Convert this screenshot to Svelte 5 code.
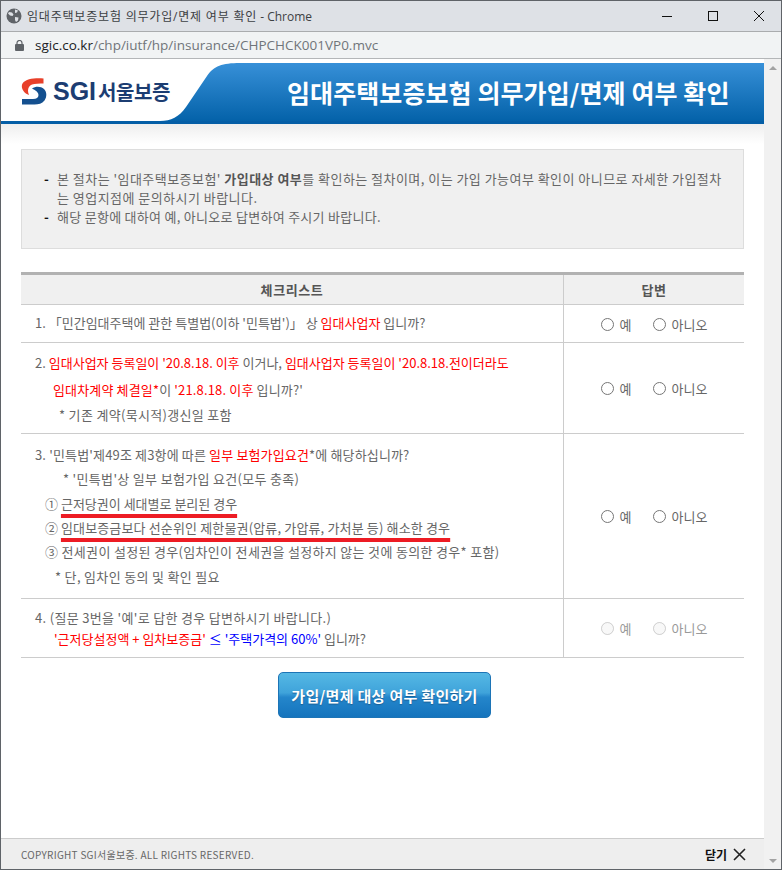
<script>
  const yesNo = (name, disabled = false) => ({ name, disabled })
</script>

{#snippet answer(opt)}
  <td class="answer">
    <label class:off={opt.disabled}><input type="radio" name={opt.name} disabled={opt.disabled} /> 예</label>
    <label class:off={opt.disabled}><input type="radio" name={opt.name} disabled={opt.disabled} /> 아니오</label>
  </td>
{/snippet}

<div class="window">
  <div class="titlebar">
    <svg class="globe" width="16" height="16" viewBox="0 0 16 16">
      <circle cx="8" cy="8" r="7.5" fill="#5f6368" />
      <path d="M3 4l3 .5 1.5 2-1 1.5-2.5-.5-2-2zM9 9l3.500 .5-.5 3-2 1.500-1-2zM9 1.500l3 1-1 2-2 .5z" fill="#dee1e6" />
    </svg>
    <span class="wintitle"><span class="ko">임대주택보증보험 의무가입/면제 여부 확인</span> - Chrome</span>
    <div class="controls">
      <svg width="10" height="10" viewBox="0 0 10 10"><path d="M0 5.500h10" stroke="#111" /></svg>
      <svg width="10" height="10" viewBox="0 0 10 10"><rect x=".5" y=".5" width="9" height="9" fill="none" stroke="#111" /></svg>
      <svg width="10" height="10" viewBox="0 0 10 10"><path d="M0 0l10 10M10 0L0 10" stroke="#111" /></svg>
    </div>
  </div>

  <div class="addressbar">
    <svg width="9" height="11" viewBox="0 0 9 11">
      <rect x="0" y="4" width="9" height="7" rx="1" fill="#5f6368" />
      <path d="M2 4.500V3a2.500 2.500 0 0 1 5 0v1.500" fill="none" stroke="#5f6368" stroke-width="1.200" />
    </svg>
    <span class="url"><b>sgic.co.kr</b>/chp/iutf/hp/insurance/CHPCHCK001VP0.mvc</span>
  </div>

  <div class="page">
    <div class="main">
      <header class="head">
        <div class="logo">
          <svg class="mark-icon" width="26" height="28" viewBox="0 0 26 28">
            <path d="M22.500 1.500C14 1 5 1.500 1.500 6.500 -.5 10 2 16 8 18 6 14 7 9 11 7.500 14 6.500 18 6.500 22.500 6.500z" fill="#e8402a" />
            <path d="M1 22H12c3.500 0 5.500-1.500 5.500-4 0-2.500-2.500-4.500-6.500-6.500 4-2.500 9-2 12 .5 3 3 3 8 .5 11.500-2.500 3-6 4-10 4H1z" fill="#14508f" />
          </svg>
          <span class="brand"><b>SGI</b>서울보증</span>
        </div>
        <svg class="curve" width="80" height="58" viewBox="0 0 80 58">
          <defs>
            <linearGradient id="blue" x1="0" y1="0" x2="0" y2="1">
              <stop offset="0" stop-color="#3790d8" />
              <stop offset="1" stop-color="#0462a9" />
            </linearGradient>
          </defs>
          <path d="M80 0C62 0 54 3 47 13L26 44C19 54 11 58 0 58H80z" fill="url(#blue)" />
        </svg>
        <div class="banner"><h1>임대주택보증보험 의무가입/면제 여부 확인</h1></div>
      </header>

      <div class="content">
        <div class="notice">
          <div class="item first"><i>-</i><p>본 절차는 '임대주택보증보험' <b>가입대상 여부</b>를 확인하는 절차이며, 이는 가입 가능여부 확인이 아니므로 자세한 가입절차는 영업지점에 문의하시기 바랍니다.</p></div>
          <div class="item"><i>-</i><p>해당 문항에 대하여 예, 아니오로 답변하여 주시기 바랍니다.</p></div>
        </div>

        <table>
          <thead>
            <tr><th>체크리스트</th><th class="col">답변</th></tr>
          </thead>
          <tbody>
            <tr class="r1">
              <td class="q"><div class="l in1">1. 「민간임대주택에 관한 특별법(이하 '민특법')」 상 <em>임대사업자</em> 입니까?</div></td>
              {@render answer(yesNo('q1'))}
            </tr>
            <tr class="r2">
              <td class="q">
                <div class="l tall in1">2. <em>임대사업자 등록일이 '20.8.18. 이후</em> 이거나, <em>임대사업자 등록일이 '20.8.18.전이더라도</em></div>
                <div class="l tall in2 sp1"><em>임대차계약 체결일*</em>이 <em>'21.8.18. 이후</em> 입니까?'</div>
                <div class="l in3 sp2">* 기존 계약(묵시적)갱신일 포함</div>
              </td>
              {@render answer(yesNo('q2'))}
            </tr>
            <tr class="r3">
              <td class="q">
                <div class="l in1 sp1">3. '민특법'제49조 제3항에 따른 <em>일부 보험가입요건</em>*에 해당하십니까?</div>
                <div class="l in4 sp2">* '민특법'상 일부 보험가입 요건(모두 충족)</div>
                <div class="l in5">① <span class="mark">근저당권이 세대별로 분리된 경우</span></div>
                <div class="l in5">② <span class="mark sp1">임대보증금보다 선순위인 제한물권(압류, 가압류, 가처분 등) 해소한 경우</span></div>
                <div class="l in5 sp2">③ 전세권이 설정된 경우(임차인이 전세권을 설정하지 않는 것에 동의한 경우* 포함)</div>
                <div class="l in6 sp2">* 단, 임차인 동의 및 확인 필요</div>
              </td>
              {@render answer(yesNo('q3'))}
            </tr>
            <tr class="r4">
              <td class="q">
                <div class="l short in1 sp2">4. (질문 3번을 '예'로 답한 경우 답변하시기 바랍니다.)</div>
                <div class="l short in7"><em>'근저당설정액 + 임차보증금'</em> <span class="bl">≤ '주택가격의 60%'</span> 입니까?</div>
              </td>
              {@render answer(yesNo('q4', true))}
            </tr>
          </tbody>
        </table>

        <div class="actions"><button type="button">가입/면제 대상 여부 확인하기</button></div>
      </div>

      <footer class="foot">
        <span class="copy">COPYRIGHT SGI서울보증. ALL RIGHTS RESERVED.</span>
        <span class="close">닫기
          <svg width="13" height="13" viewBox="0 0 13 13"><path d="M1 1l11 11M12 1L1 12" stroke="#222" stroke-width="1.600" /></svg>
        </span>
      </footer>
    </div>

    <div class="scroll">
      <span class="up"></span>
      <span class="down"></span>
    </div>
  </div>
</div>

<style>
  :global(body) {
    margin: 0;
    overflow: hidden;
    background: #fff;
  }

  .window {
    width: 782px;
    height: 870px;
    box-sizing: border-box;
    border: 1px solid #5f6368;
    display: flex;
    flex-direction: column;
    font-family: "Noto Sans CJK KR", sans-serif;
    font-size: 13px;
    color: #666;
  }

  .titlebar {
    height: 30px;
    flex: none;
    background: #dee1e6;
    display: flex;
    align-items: center;
    padding-left: 5px;
    border-bottom: 1px solid #aaacae;
  }

  .wintitle {
    margin-left: 5px;
    color: #3c4043;
    font-size: 12px;
    font-family: "Open Sans", "Noto Sans CJK KR", sans-serif;
  }

  .wintitle .ko {
    letter-spacing: .8px;
  }

  .controls {
    margin-left: auto;
    display: flex;
    gap: 36px;
    padding-right: 17px;
  }

  .addressbar {
    height: 26px;
    flex: none;
    background: #f1f3f4;
    border-bottom: 1px solid #b4b6b8;
    display: flex;
    align-items: center;
    padding-left: 14px;
    gap: 11px;
  }

  .url {
    font-family: "Open Sans", sans-serif;
    font-size: 13.500px;
    color: #70757a;
  }

  .url b {
    color: #202124;
    font-weight: 400;
  }

  .page {
    flex: 1;
    min-height: 0;
    display: flex;
  }

  .main {
    flex: 1;
    min-width: 0;
    display: flex;
    flex-direction: column;
    padding-top: 4px;
  }

  .head {
    height: 61px;
    flex: none;
    display: flex;
    box-sizing: border-box;
    border-bottom: 3px solid #045ea6;
  }

  .logo {
    width: 159px;
    flex: none;
    display: flex;
    align-items: center;
    box-sizing: border-box;
    padding: 0 0 2px 20px;
    gap: 6px;
  }

  .mark-icon {
    flex: none;
  }

  .brand {
    font-size: 20px;
    font-weight: 700;
    color: #1c3d72;
    letter-spacing: -.4px;
    white-space: nowrap;
  }

  .brand b {
    font-family: "Liberation Sans", sans-serif;
    font-size: 25px;
    letter-spacing: 0;
    margin-right: 2px;
  }

  .curve {
    flex: none;
    display: block;
  }

  .banner {
    flex: 1;
    background: linear-gradient(#3790d8, #0462a9);
    display: flex;
    align-items: center;
    padding-left: 47px;
  }

  h1 {
    margin: 0;
    font-size: 25px;
    font-weight: 700;
    color: #fff;
    letter-spacing: .08px;
    white-space: nowrap;
  }

  .content {
    flex: 1;
    box-sizing: border-box;
    padding: 25px 20px 0;
    background: linear-gradient(#eee, #fff 20px);
  }

  .notice {
    height: 100px;
    box-sizing: border-box;
    background: #f0f0f0;
    border: 1px solid #ddd;
    padding: 19px 20px 0 22px;
    font-size: 13px;
    letter-spacing: .28px;
    line-height: 19px;
  }

  .item {
    display: flex;
  }

  .item.first {
    letter-spacing: .46px;
    word-break: break-all;
  }

  .item i {
    font-style: normal;
    font-weight: 700;
    color: #111;
    width: 13px;
    flex: none;
  }

  .item p {
    margin: 0;
  }

  .item b {
    color: #555;
  }

  table {
    width: 723px;
    margin-top: 23px;
    border-collapse: collapse;
    table-layout: fixed;
    border-top: 3px solid #b2b2b2;
  }

  th {
    height: 29px;
    background: #f0f0f0;
    border-bottom: 1px solid #ccc;
    padding: 0;
    font-size: 13px;
    letter-spacing: .6px;
    font-weight: 700;
    color: #555;
  }

  th.col {
    width: 180px;
    border-left: 1px solid #ccc;
  }

  td {
    padding: 0;
    border-bottom: 1px solid #ccc;
  }

  .answer {
    border-left: 1px solid #ccc;
    padding-top: 2px;
    text-align: center;
    white-space: nowrap;
  }

  .answer label {
    display: inline-flex;
    align-items: center;
    gap: 6px;
    margin: 0 9px;
  }

  .answer input {
    margin: 0;
    width: 13px;
    height: 13px;
  }

  .answer .off {
    color: #999;
  }

  .r1 { height: 38px; }
  .r2 { height: 91px; }
  .r3 { height: 165px; }
  .r4 { height: 59px; }

  .l {
    line-height: 24.400px;
    white-space: nowrap;
  }

  .l.tall { line-height: 27px; }
  .l.short { line-height: 21px; }

  .in1 { padding-left: 14px; }
  .in2 { padding-left: 32px; }
  .in3 { padding-left: 38px; }
  .in4 { padding-left: 42px; }
  .in5 { padding-left: 24px; }
  .in6 { padding-left: 34px; }
  .in7 { padding-left: 33px; }

  .sp1 { letter-spacing: .15px; }
  .sp2 { letter-spacing: .32px; }

  em {
    font-style: normal;
    color: #f00;
  }

  .bl {
    color: #00f;
  }

  .mark {
    text-decoration: underline #ed1c24 4px;
    text-underline-offset: 5px;
    text-decoration-skip-ink: none;
  }

  .actions {
    display: flex;
    justify-content: center;
    padding: 14px 20px 0 0;
  }

  button {
    width: 213px;
    height: 46px;
    margin-left: 24px;
    border: 1px solid #1c74b6;
    border-radius: 5px;
    background: linear-gradient(#55b8e4, #3fa3da 45%, #2486cb 55%, #1574bd);
    color: #fff;
    font-family: inherit;
    font-size: 15px;
    letter-spacing: .3px;
    font-weight: 700;
    text-shadow: 0 1px 1px #1a5f95;
    padding: 0;
  }

  .foot {
    height: 31px;
    flex: none;
    box-sizing: border-box;
    background: #eee;
    border-top: 1px solid #ccc;
    display: flex;
    align-items: center;
    justify-content: space-between;
    padding: 0 18px 0 20px;
  }

  .copy {
    font-size: 10px;
    letter-spacing: .27px;
    color: #666;
  }

  .close {
    display: flex;
    align-items: center;
    gap: 6px;
    color: #111;
    font-size: 12px;
    font-weight: 700;
  }

  .scroll {
    width: 17px;
    flex: none;
    background: #f1f1f1;
    display: flex;
    flex-direction: column;
    justify-content: space-between;
    align-items: center;
    padding: 6px 0;
    box-sizing: border-box;
  }

  .up {
    border: 4px solid transparent;
    border-top: 0;
    border-bottom: 4px solid #a3a3a3;
    margin-top: 1px;
  }

  .down {
    border: 4px solid transparent;
    border-bottom: 0;
    border-top: 4px solid #a3a3a3;
  }
</style>
